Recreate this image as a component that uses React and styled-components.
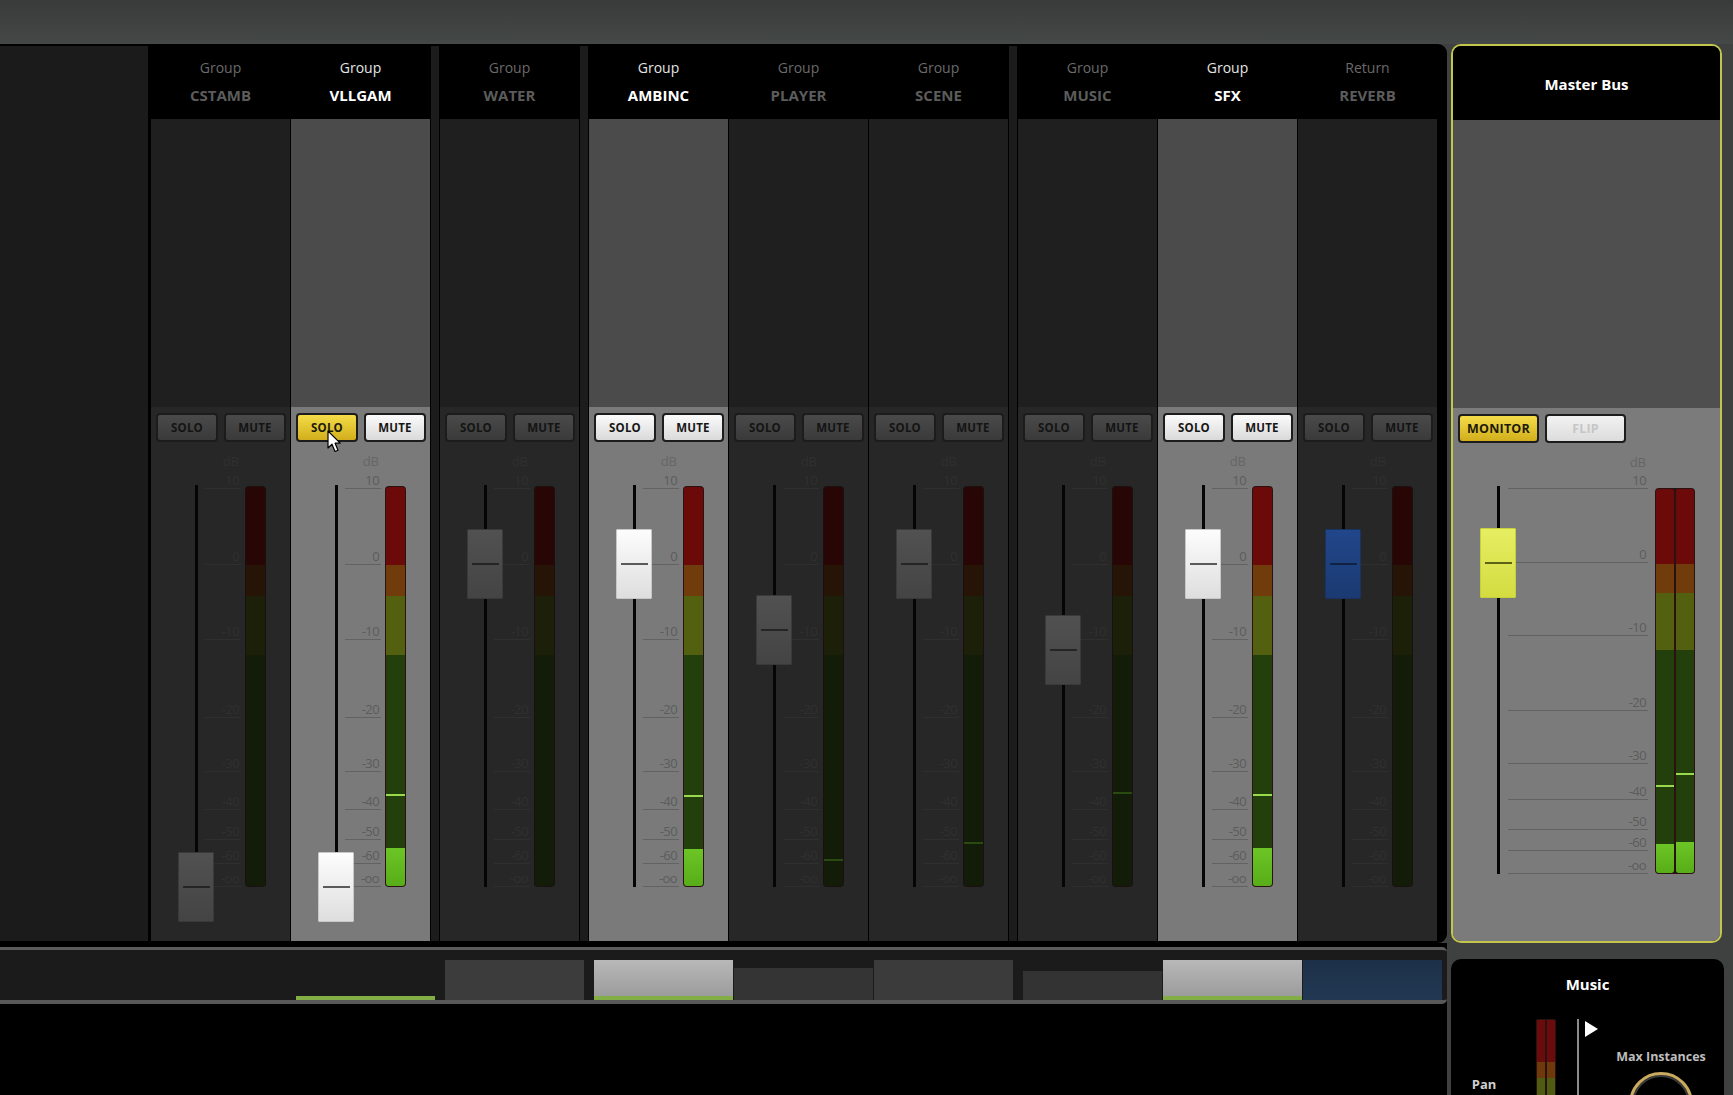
import React from 'react';
import styled, { createGlobalStyle, css } from 'styled-components';

const GlobalStyle = createGlobalStyle`
  html, body { margin: 0; padding: 0; background: #3e4140; }
  body { font-family: "Open Sans", "DejaVu Sans", sans-serif; }
`;

const FADER_TOP = 485;

const CH_SCALE = [['10', 488], ['0', 564], ['-10', 639], ['-20', 717], ['-30', 771], ['-40', 809], ['-50', 839], ['-60', 863], ['-oo', 886]];
const MASTER_SCALE = [['10', 487], ['0', 561], ['-10', 634], ['-20', 709], ['-30', 762], ['-40', 798], ['-50', 828], ['-60', 849], ['-oo', 872]];

const strips = [
  { kind: 'Group', name: 'CSTAMB', fader: 887, meters: [{}] },
  { kind: 'Group', name: 'VLLGAM', active: true, solo: 'yellow', mute: 'white', fader: 887, meters: [{ level: 849, peak: 794 }], cursor: true },
  'div',
  { kind: 'Group', name: 'WATER', fader: 564, meters: [{}] },
  'div',
  { kind: 'Group', name: 'AMBINC', active: true, solo: 'white', mute: 'white', fader: 564, meters: [{ level: 850, peak: 795 }] },
  { kind: 'Group', name: 'PLAYER', fader: 630, meters: [{ peak: 859 }] },
  { kind: 'Group', name: 'SCENE', fader: 564, meters: [{ peak: 842 }] },
  'div',
  { kind: 'Group', name: 'MUSIC', fader: 650, meters: [{ peak: 792 }] },
  { kind: 'Group', name: 'SFX', active: true, solo: 'white', mute: 'white', fader: 564, meters: [{ level: 849, peak: 794 }] },
  { kind: 'Return', name: 'REVERB', fader: 564, handle: 'blue', meters: [{}] },
];

const bottomSegs = [
  { h: 0 }, { h: 0, green: true }, 'div',
  { h: 40, bg: '#3c3c3c' }, 'div',
  { h: 40, bg: 'linear-gradient(#b8b8b8, #9c9c9c)', green: true },
  { h: 32, bg: '#343434' },
  { h: 40, bg: '#3b3b3b' }, 'div',
  { h: 29, bg: '#333333' },
  { h: 40, bg: 'linear-gradient(#b8b8b8, #9c9c9c)', green: true },
  { h: 40, bg: 'linear-gradient(#1d3049, #223852)' },
];

const Screen = styled.div`
  width: 1733px;
  height: 1095px;
  overflow: hidden;
  display: flex;
  flex-direction: column;
  background: #3e4140;
`;

const TopBar = styled.div`
  flex: none;
  height: 44px;
  background: linear-gradient(#383b3a, #444847);
`;

const Body = styled.div`
  flex: 1;
  display: flex;
  min-height: 0;
`;

const LeftCol = styled.div`
  width: 1447px;
  display: flex;
  flex-direction: column;
`;

const MixerPanel = styled.div`
  flex: none;
  box-sizing: border-box;
  height: 899px;
  padding: 2px 7px 2px 0;
  background: #000;
  border-radius: 0 9px 9px 0;
  display: flex;
`;

const LeftEmpty = styled.div`
  width: 148px;
  margin-right: 3px;
  background: #1b1b1b;
`;

const Divider = styled.div`
  width: 8px;
  margin: 0 1px;
  background: #1c1c1c;
`;

const StripBox = styled.div`
  width: 139px;
  margin-right: ${p => (p.$gap ? 1 : 0)}px;
  display: flex;
  flex-direction: column;
`;

const Header = styled.div`
  height: 73px;
  box-sizing: border-box;
  padding-top: 12px;
  text-align: center;
  background: #000;
`;

const Kind = styled.div`
  font-size: 14px;
  line-height: 20px;
  color: ${p => (p.$active ? '#e4e4e4' : '#6a6a6a')};
`;

const Name = styled.div`
  margin-top: 7px;
  font-size: 15px;
  font-weight: 700;
  line-height: 20px;
  color: ${p => (p.$active ? '#ffffff' : '#5c5c5c')};
`;

const Upper = styled.div`
  height: 288px;
  background: ${p => (p.$active ? '#4b4b4b' : '#1f1f1f')};
`;

const Lower = styled.div`
  flex: 1;
  background: ${p => (p.$active ? '#7a7a7a' : '#272727')};
`;

const ButtonRow = styled.div`
  position: relative;
  display: flex;
  gap: 6px;
  padding: 6px 0 0 ${p => p.$left || 5}px;
`;

const btnSkins = {
  dark: css`
    background: linear-gradient(#4a4a4a, #3a3a3a);
    color: #141414;
  `,
  white: css`
    background: linear-gradient(#fbfbfb, #dadada);
    color: #161616;
  `,
  yellow: css`
    background: linear-gradient(#f4dc48, #d2ae1c);
    color: #1c1a08;
  `,
  off: css`
    background: linear-gradient(#f2f2f2, #dcdcdc);
    color: #c6c6c6;
  `,
};

const Btn = styled.div`
  box-sizing: border-box;
  width: ${p => p.$w || 62}px;
  height: 29px;
  border: 2px solid #1c1c1c;
  border-radius: 4px;
  display: flex;
  align-items: center;
  justify-content: center;
  font-size: ${p => (p.$w ? 12.5 : 11.5)}px;
  font-weight: 700;
  letter-spacing: 0.2px;
  ${p => btnSkins[p.$v || 'dark']}
`;

const CursorBox = styled.svg`
  position: absolute;
  left: 36px;
  top: 23px;
`;

const FaderArea = styled.div`
  display: flex;
  align-items: flex-start;
  margin-top: 8px;
  padding-top: 35px;
`;

const TrackCol = styled.div`
  position: relative;
  z-index: 2;
  width: ${p => p.$w}px;
  flex: none;
`;

const Track = styled.div`
  margin-left: 44px;
  width: 3px;
  background: #050505;
`;

const handleSkins = {
  dark: css`
    background: linear-gradient(#515151, #444);
    border-color: #3a3a3a;
  `,
  white: css`
    background: linear-gradient(#fdfdfd, #dedede);
    border-color: #c8c8c8;
  `,
  blue: css`
    background: linear-gradient(#21468a, #1b3a72);
    border-color: #183262;
  `,
  yellow: css`
    background: linear-gradient(#e6ee62, #d3dc40);
    border-color: #c7cf3a;
  `,
};

const Handle = styled.div`
  position: absolute;
  left: 27px;
  box-sizing: border-box;
  width: 36px;
  height: 70px;
  border: 1px solid;
  border-radius: 1px;
  display: flex;
  align-items: center;
  justify-content: center;
  ${p => handleSkins[p.$kind]}
`;

const HandleMark = styled.div`
  width: 27px;
  height: 2px;
  background: ${p => (p.$kind === 'white' ? '#5a5a5a' : p.$kind === 'yellow' ? '#5e6214' : p.$kind === 'blue' ? '#0f2244' : '#252525')};
`;

const ScaleCol = styled.div`
  position: relative;
  width: ${p => p.$w}px;
  flex: none;
`;

const DbLabel = styled.div`
  position: absolute;
  right: 2px;
  top: -31px;
  font-size: 13px;
  line-height: 14px;
  color: ${p => (p.$dim ? '#303030' : '#666')};
`;

const Tick = styled.div`
  position: absolute;
  left: 0;
  right: 0;
  border-top: 1px solid ${p => (p.$dim ? '#2f2f2f' : '#626262')};
`;

const TickLabel = styled.div`
  position: absolute;
  right: 2px;
  bottom: calc(100% + 2px);
  font-size: 13px;
  line-height: 14px;
  letter-spacing: -0.6px;
  color: ${p => (p.$dim ? '#303030' : '#5c5c5c')};
`;

const Meter = styled.div`
  flex: none;
  box-sizing: border-box;
  display: flex;
  gap: 2px;
  margin-left: ${p => p.$gap}px;
  width: ${p => p.$w}px;
  padding: 1px;
  border-radius: 4px;
  background: ${p => (p.$dim ? '#1a1010' : '#2a1212')};
`;

const meterFill = dim =>
  dim
    ? 'linear-gradient(#280606 0 19.5%, #261507 19.5% 27.2%, #1c2008 27.2% 42%, #121c08 42%)'
    : 'linear-gradient(#6c0a0a 0 19.5%, #703c0c 19.5% 27.2%, #52600f 27.2% 42%, #233f0c 42%)';

const MeterChan = styled.div`
  position: relative;
  flex: 1;
  border-radius: 3px;
  overflow: hidden;
  background: ${p => meterFill(p.$dim)};
`;

const Level = styled.div`
  position: absolute;
  left: 0;
  right: 0;
  bottom: 0;
  background: linear-gradient(#6cc526, #58ad18);
`;

const Peak = styled.div`
  position: absolute;
  left: 0;
  right: 0;
  height: 2px;
  background: ${p => (p.$dim ? '#2b4a12' : '#98d94e')};
`;

function Fader({ dim, scale, bottom, value, handle, meters, trackW, scaleW, meterGap, meterW, meterTop }) {
  const meterBottom = scale[scale.length - 1][1] + 1;
  const mh = meterBottom - meterTop;
  return (
    <FaderArea>
      <TrackCol $w={trackW}>
        <Track style={{ height: bottom - FADER_TOP }} />
        <Handle $kind={handle} style={{ top: value - FADER_TOP - 35 }}>
          <HandleMark $kind={handle} />
        </Handle>
      </TrackCol>
      <ScaleCol $w={scaleW}>
        <DbLabel $dim={dim}>dB</DbLabel>
        {scale.map(([t, y]) => (
          <Tick key={t} $dim={dim} style={{ top: y - FADER_TOP }}>
            <TickLabel $dim={dim}>{t}</TickLabel>
          </Tick>
        ))}
      </ScaleCol>
      <Meter $dim={dim} $gap={meterGap} $w={meterW} style={{ marginTop: meterTop - FADER_TOP, height: mh }}>
        {meters.map((m, i) => (
          <MeterChan key={i} $dim={dim}>
            {m.level && <Level style={{ height: meterBottom - m.level }} />}
            {m.peak && <Peak $dim={dim} style={{ top: m.peak - meterTop - 1 }} />}
          </MeterChan>
        ))}
      </Meter>
    </FaderArea>
  );
}

const Cursor = () => (
  <CursorBox width="16" height="24" viewBox="0 0 16 24">
    <path d="M1 1 L1 18 L5 14.2 L8 21.5 L11 20.2 L8.1 13.2 L13.2 13.2 Z" fill="#fff" stroke="#000" strokeWidth="1.2" strokeLinejoin="round" />
  </CursorBox>
);

function Strip({ s, gap }) {
  return (
    <StripBox $gap={gap}>
      <Header>
        <Kind $active={s.active}>{s.kind}</Kind>
        <Name $active={s.active}>{s.name}</Name>
      </Header>
      <Upper $active={s.active} />
      <Lower $active={s.active}>
        <ButtonRow>
          <Btn $v={s.solo}>SOLO</Btn>
          <Btn $v={s.mute}>MUTE</Btn>
          {s.cursor && <Cursor />}
        </ButtonRow>
        <Fader
          dim={!s.active}
          scale={CH_SCALE}
          bottom={887}
          value={s.fader}
          handle={s.handle || (s.active ? 'white' : 'dark')}
          meters={s.meters}
          trackW={54}
          scaleW={36}
          meterGap={4}
          meterW={21}
          meterTop={486}
        />
      </Lower>
    </StripBox>
  );
}

const BottomArea = styled.div`
  flex: 1;
  background: #000;
  padding-top: 4px;
`;

const BottomStrip = styled.div`
  box-sizing: border-box;
  height: 57px;
  padding-left: 156px;
  display: flex;
  align-items: flex-end;
  background: #1b1b1b;
  border-top: 3px solid #5c5c5c;
  border-bottom: 4px solid #585858;
  border-radius: 0 5px 5px 0;
`;

const Seg = styled.div`
  box-sizing: border-box;
  width: 139px;
  margin-right: 1px;
  background: ${p => p.$bg || 'transparent'};
  border-bottom: ${p => (p.$green ? '4px solid #82ae45' : 'none')};
`;

const SegGap = styled.div`
  width: 9px;
`;

const RightCol = styled.div`
  width: 273px;
  margin-left: 4px;
  display: flex;
  flex-direction: column;
`;

const MasterPanel = styled.div`
  flex: none;
  box-sizing: border-box;
  width: 271px;
  height: 899px;
  border: 2px solid #c4c64b;
  border-radius: 10px;
  overflow: hidden;
  display: flex;
  flex-direction: column;
`;

const MasterHeader = styled.div`
  height: 74px;
  box-sizing: border-box;
  padding-top: 28px;
  background: #000;
  color: #fff;
  font-size: 15px;
  font-weight: 700;
  line-height: 20px;
  text-align: center;
`;

const MasterUpper = styled.div`
  height: 288px;
  background: #4f4f4f;
`;

const MasterLower = styled.div`
  flex: 1;
  background: #7b7b7b;
`;

const MusicPanel = styled.div`
  flex: none;
  margin-top: 16px;
  height: 160px;
  background: #000;
  border-radius: 10px 10px 0 0;
`;

const MusicTitle = styled.div`
  padding-top: 15px;
  color: #fff;
  font-size: 15px;
  font-weight: 700;
  line-height: 20px;
  text-align: center;
`;

const MusicBody = styled.div`
  display: flex;
  align-items: flex-start;
  margin-top: 25px;
`;

const PanCol = styled.div`
  width: 66px;
  padding-top: 58px;
  text-align: center;
  color: #cfcfcf;
  font-size: 13px;
  font-weight: 700;
  line-height: 14px;
`;

const MiniMeter = styled.div`
  display: flex;
  gap: 2px;
  margin-left: 19px;
  width: 20px;
  height: 90px;
  padding: 1px;
  box-sizing: border-box;
  background: #2a1212;
  border-radius: 2px;
`;

const MiniChan = styled.div`
  flex: 1;
  background: linear-gradient(#6a0c0c 0 48%, #6e3a0c 48% 66%, #4e5c12 66%);
`;

const VLine = styled.div`
  margin-left: 21px;
  width: 2px;
  height: 90px;
  background: #8a8a8a;
`;

const PlayArrow = styled.div`
  margin: 2px 0 0 6px;
  width: 0;
  height: 0;
  border-top: 8px solid transparent;
  border-bottom: 8px solid transparent;
  border-left: 13px solid #fff;
`;

const InstCol = styled.div`
  flex: 1;
  display: flex;
  flex-direction: column;
  align-items: center;
`;

const InstLabel = styled.div`
  margin-top: 29px;
  color: #bdbdbd;
  font-size: 12.5px;
  font-weight: 700;
  line-height: 18px;
`;

const Knob = styled.div`
  margin-top: 6px;
  width: 64px;
  height: 64px;
  box-sizing: border-box;
  border-radius: 50%;
  border: 3px solid #c9aa5e;
  box-shadow: inset 0 0 0 2px #3a3a3a;
  background: #000;
`;

export default function App() {
  return (
    <>
      <GlobalStyle />
      <Screen>
        <TopBar />
        <Body>
          <LeftCol>
            <MixerPanel>
              <LeftEmpty />
              {strips.map((s, i) =>
                s === 'div' ? (
                  <Divider key={i} />
                ) : (
                  <Strip key={s.name} s={s} gap={strips[i + 1] && strips[i + 1] !== 'div'} />
                )
              )}
            </MixerPanel>
            <BottomArea>
              <BottomStrip>
                {bottomSegs.map((b, i) =>
                  b === 'div' ? <SegGap key={i} /> : <Seg key={i} $bg={b.bg} $green={b.green} style={{ height: b.h || (b.green ? 4 : 0) }} />
                )}
              </BottomStrip>
            </BottomArea>
          </LeftCol>
          <RightCol>
            <MasterPanel>
              <MasterHeader>Master Bus</MasterHeader>
              <MasterUpper />
              <MasterLower>
                <ButtonRow $left={5}>
                  <Btn $v="yellow" $w={81}>MONITOR</Btn>
                  <Btn $v="off" $w={81}>FLIP</Btn>
                </ButtonRow>
                <Fader
                  scale={MASTER_SCALE}
                  bottom={873}
                  value={562}
                  handle="yellow"
                  meters={[{ level: 844, peak: 784 }, { level: 842, peak: 772 }]}
                  trackW={55}
                  scaleW={140}
                  meterGap={7}
                  meterW={40}
                  meterTop={487}
                />
              </MasterLower>
            </MasterPanel>
            <MusicPanel>
              <MusicTitle>Music</MusicTitle>
              <MusicBody>
                <PanCol>Pan</PanCol>
                <MiniMeter>
                  <MiniChan />
                  <MiniChan />
                </MiniMeter>
                <VLine />
                <PlayArrow />
                <InstCol>
                  <InstLabel>Max Instances</InstLabel>
                  <Knob />
                </InstCol>
              </MusicBody>
            </MusicPanel>
          </RightCol>
        </Body>
      </Screen>
    </>
  );
}
